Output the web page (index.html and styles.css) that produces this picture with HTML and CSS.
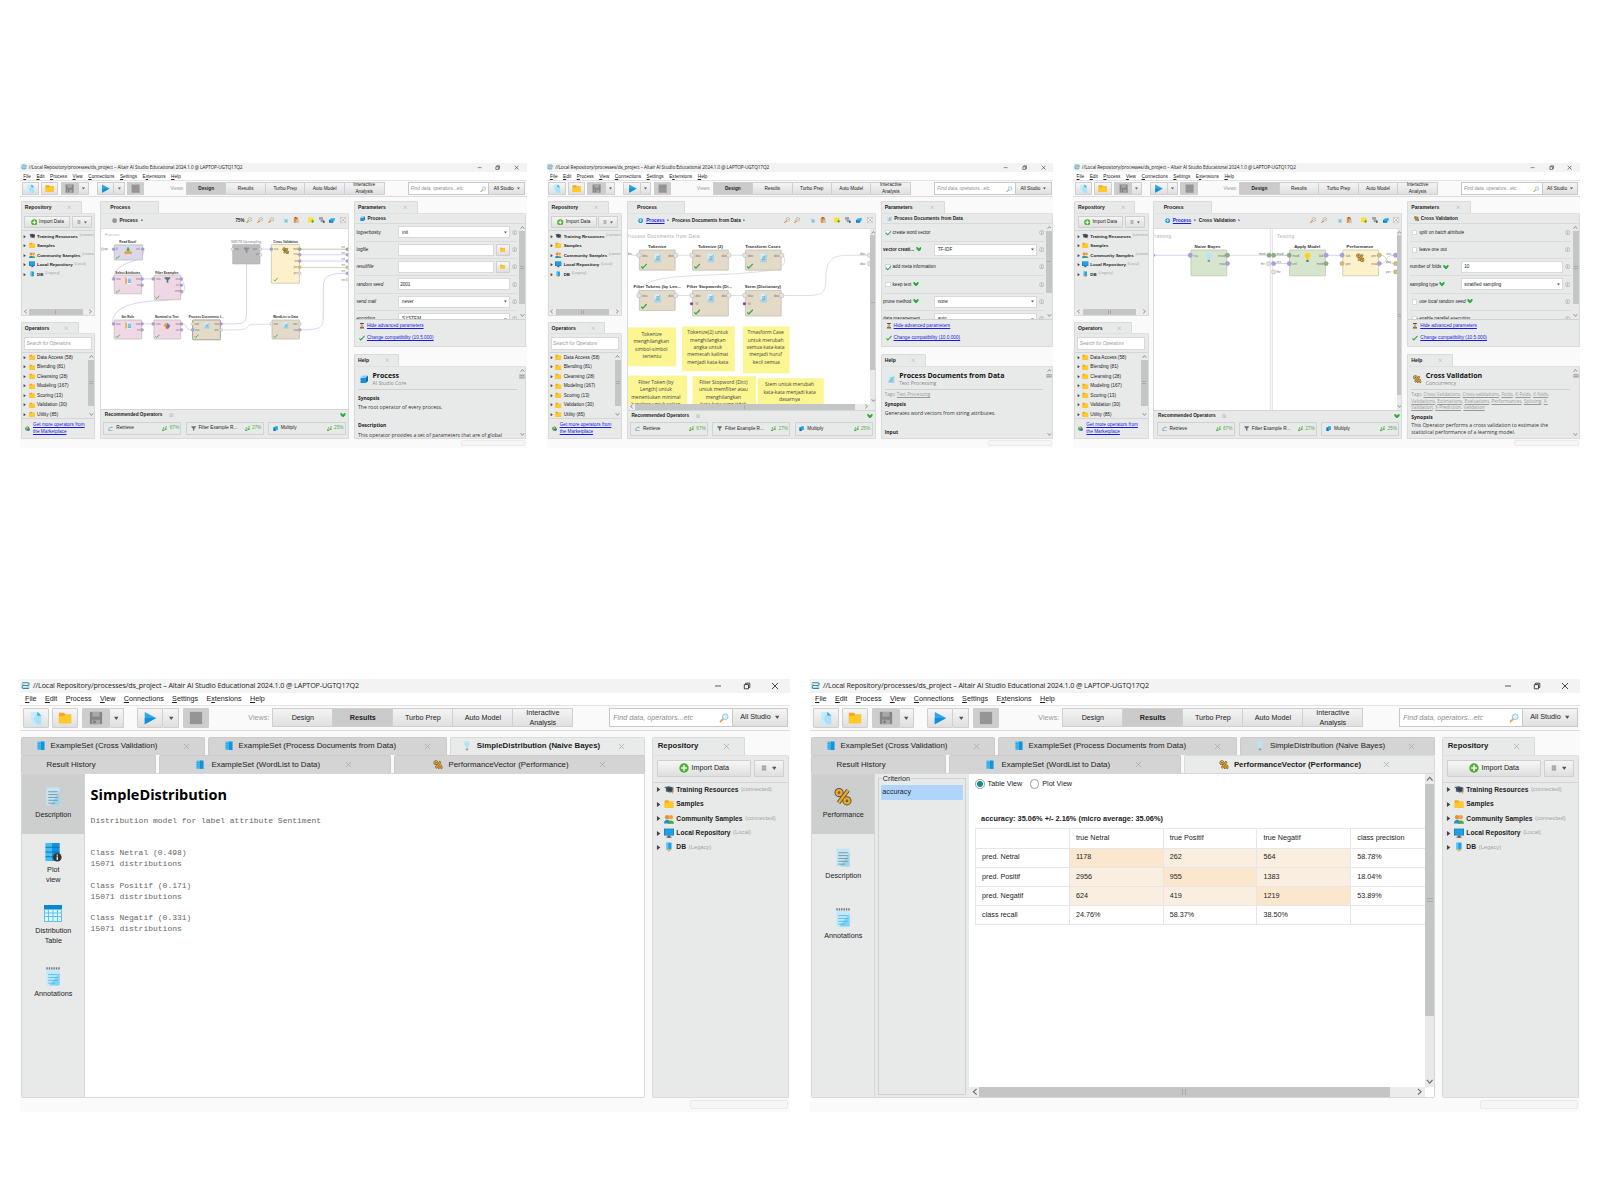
FILE: index.html
```html
<!DOCTYPE html>
<html lang="en">
<head>
<meta charset="utf-8">
<title>Altair AI Studio – ds_project</title>
<link rel="stylesheet" href="styles.css">
<script src="panels.js" defer></script>
</head>
<body>
<svg class="sprite" aria-hidden="true">
  <symbol id="logo" viewBox="0 0 16 16"><path d="M2 3h10q2.500 0 2.500 2.500T12 8H4.500Q2 8 2 10.500T4.500 13H14" fill="none" stroke="#2b8ba5" stroke-width="2"/><path d="M0 6h6M10 10.500h6" stroke="#6db5c8" stroke-width="1.200"/></symbol>
  <symbol id="new" viewBox="0 0 16 16"><path d="M2.500 1H10l4 4v10.500H2.500z" fill="#c5ebfc"/><path d="M10 1l4 4v10.500H9L5 9z" fill="#8fd8f8" opacity=".5"/><path d="M9.500 1l4.500 4.500-4.500-.5z" fill="#2fa5e0"/></symbol>
  <symbol id="folder" viewBox="0 0 16 16"><path d="M1 2h6l1.500 2H15v10H1z" fill="#f5a81c"/><path d="M1 6h5l1.500-1.500H15V14H1z" fill="#ffc928"/></symbol>
  <symbol id="save" viewBox="0 0 16 16"><path d="M1 1h14v14H1z" fill="#868686"/><path d="M4 1h8v5.500H4zM3.500 10h9v5h-9z" fill="#a8a8a8"/><path d="M5 11h2.500v3H5z" fill="#777"/></symbol>
  <symbol id="play" viewBox="0 0 16 16"><path d="M2 1l13 7-13 7z" fill="#29a9ec"/><path d="M2 8h13L2 15z" fill="#1290d6"/></symbol>
  <symbol id="stop" viewBox="0 0 16 16"><path d="M1 1h14v14H1z" fill="#959595"/></symbol>
  <symbol id="caret" viewBox="0 0 8 8"><path d="M0 1.500h8L4 7z" fill="#555"/></symbol>
  <symbol id="right" viewBox="0 0 8 8"><path d="M1.500 0L7 4 1.500 8z" fill="#444"/></symbol>
  <symbol id="x" viewBox="0 0 8 8"><path d="M1 1l6 6M7 1L1 7" fill="none" stroke="currentColor" stroke-width=".9"/></symbol>
  <symbol id="min" viewBox="0 0 8 8"><path d="M1 4h6" stroke="#333" stroke-width=".8"/></symbol>
  <symbol id="restore" viewBox="0 0 8 8"><path d="M1.300 2.600h4.200v4.200H1.300zM2.600 2.500V1.200h4.200v4.300H5.600" fill="none" stroke="#333" stroke-width=".9"/></symbol>
  <symbol id="search" viewBox="0 0 16 16"><path d="M7 9l-5.500 5.500" stroke="#f19a3e" stroke-width="2.600"/><circle cx="10" cy="6" r="4.500" fill="#dff3fd" stroke="#79c3ea" stroke-width="1.400"/></symbol>
  <symbol id="zoomicon" viewBox="0 0 16 16"><path d="M7 9l-6 6" stroke="#ee8a2c" stroke-width="3"/><circle cx="10" cy="6" r="4.800" fill="#f3f9fb" stroke="#a39a8c" stroke-width="1.500"/><path d="M8 6h4" stroke="#4aae3c" stroke-width="1.500"/></symbol>
  <symbol id="plus" viewBox="0 0 16 16"><circle cx="8" cy="8" r="7.500" fill="#4caf2e"/><path d="M8 3.500v9M3.500 8h9" stroke="#fff" stroke-width="2.600"/></symbol>
  <symbol id="list" viewBox="0 0 8 8"><path d="M1 1.500h6M1 4h6M1 6.500h6" stroke="#555" stroke-width="1"/></symbol>
  <symbol id="training" viewBox="0 0 16 16"><path d="M0 3l8-1 7 2v7l-6 1-6-1.500V5z" fill="#4d6573"/><path d="M3 5l5-1 5 1v4l-5 1z" fill="#33444f"/><path d="M13 5l2 9-2-1z" fill="#f08b32"/></symbol>
  <symbol id="people" viewBox="0 0 16 16"><circle cx="5" cy="5" r="3.500" fill="#ef8b34"/><circle cx="11" cy="5" r="3.500" fill="#f6a040"/><path d="M0 15c0-8 10-8 11 0z" fill="#1c8fd6"/><path d="M6 15.500c0-7 10-7 10 0z" fill="#45a843"/></symbol>
  <symbol id="monitor" viewBox="0 0 16 16"><path d="M0 1h16v11H0z" fill="#1f6fa5"/><path d="M1 2h14v9H1z" fill="#1aa3ec"/><path d="M6 12h4v2h2v1.500H4V14h2z" fill="#555"/></symbol>
  <symbol id="db" viewBox="0 0 16 16"><path d="M4 1h8v11H4z" fill="#1ba0ea"/><path d="M4 1h3v11H4z" fill="#5cc6f7"/><path d="M4 12h8l-3 3H7z" fill="#f5b52c"/></symbol>
  <symbol id="data" viewBox="0 0 16 16"><path d="M2 1h8v14H2z" fill="#47bff5"/><path d="M8 1h6v14H8z" fill="#1593dd"/><path d="M2 4.500h7M2 8h7M2 11.500h7" stroke="#1b86bd" stroke-width=".8"/></symbol>
  <symbol id="bulb" viewBox="0 0 16 16"><path d="M8 0a5 5 0 0 1 3 9l-1 2.500H6L5 9a5 5 0 0 1 3-9z" fill="#b8e4f8"/><path d="M6 12.500h4V16H6z" fill="#7fa2b0"/></symbol>
  <symbol id="bulby" viewBox="0 0 16 16"><path d="M8 0a5 5 0 0 1 3 9l-1 2.500H6L5 9a5 5 0 0 1 3-9z" fill="#ffd01f"/><path d="M6 12.500h4V16H6z" fill="#6a7880"/></symbol>
  <symbol id="percent" viewBox="0 0 16 16"><g fill="none" stroke="#555" stroke-width="3.800"><circle cx="4.500" cy="4.500" r="2.200"/><circle cx="11.500" cy="11.800" r="2.200"/><path d="M12.500 2.500L4 13.500"/></g><g fill="none" stroke="#f2a91e" stroke-width="2"><circle cx="4.500" cy="4.500" r="2.200"/><circle cx="11.500" cy="11.800" r="2.200"/><path d="M12.500 2.500L4 13.500"/></g></symbol>
  <symbol id="doc" viewBox="0 0 16 20"><path d="M1 .5h14v19H1z" fill="#c3e6f5"/><path d="M15 4v15.500H5z" fill="#9ed3ec"/><path d="M3 5h10M3 8h10M3 11h10M3 14h10M3 17h7" stroke="#7795a3" stroke-width="1"/></symbol>
  <symbol id="note" viewBox="0 0 16 20"><path d="M1 3h14v16.500H1z" fill="#bfe9fc"/><path d="M15 6v13.500H4z" fill="#7fd2f9"/><path d="M3 8h10M3 11h10M3 14h10M3 17h7" stroke="#4db5e6" stroke-width=".9"/><path d="M1 1.500h14" stroke="#777" stroke-width="2.500" stroke-dasharray="1.500 1"/></symbol>
  <symbol id="plot" viewBox="0 0 18 20"><path d="M1 0h8v19H1z" fill="#45bdf3"/><path d="M8 0h8v19H8z" fill="#0f93df"/><path d="M1 4.500h15M1 9.500h15M1 14.500h15" stroke="#0d6ca5" stroke-width=".9"/><circle cx="13.500" cy="15" r="4.500" fill="#333"/><path d="M13.500 12v1.300M13.500 14.200V18" stroke="#fff" stroke-width="1.300"/></symbol>
  <symbol id="table" viewBox="0 0 18 17"><path d="M0 0h18v17H0z" fill="#58c2f3"/><path d="M0 0h18v4H0z" fill="#0c86cc"/><path d="M1 5h3v2.500H1zM5 5h3.500v2.500H5zM9.500 5H13v2.500H9.500zM14 5h3v2.500h-3zM1 8.500h3V11H1zM5 8.500h3.500V11H5zM9.500 8.500H13V11H9.500zM14 8.500h3V11h-3zM1 12h3v4H1zM5 12h3.500v4H5zM9.500 12H13v4H9.500zM14 12h3v4h-3z" fill="#e3f6fe"/></symbol>
  <symbol id="cube" viewBox="0 0 16 16"><path d="M1 5h10v10H1z" fill="#1590d8"/><path d="M1 5l4-4h10l-4 4z" fill="#7dd0f7"/><path d="M11 5l4-4v10l-4 4z" fill="#0b6ba8"/></symbol>
  <symbol id="multi" viewBox="0 0 16 16"><path d="M1 4h8v11H1z" fill="#0c78bd"/><path d="M6 1h9v11H6z" fill="#24a9ee"/></symbol>
  <symbol id="funnel" viewBox="0 0 16 16"><path d="M1 1h14v2L10 8v7l-4-2V8L1 3z" fill="#5d7580"/></symbol>
  <symbol id="retrieve" viewBox="0 0 16 16"><path d="M3 13V8l4-4h7" fill="none" stroke="#5a7684" stroke-width="2"/><path d="M1 14h13" stroke="#49a9d8" stroke-width="2"/></symbol>
  <symbol id="hands" viewBox="0 0 16 16"><path d="M0 8h7v3H0zM0 12h7v3H0zM8 5h6v3H8zM8 9h6v3H8zM11 0h3v4h-3zM3 4h3v3H3z" fill="#58b348"/></symbol>
  <symbol id="chev" viewBox="0 0 16 12"><path d="M0 1l4-1 4 4 4-4 4 1-2 5-6 6-6-6z" fill="#2bab35"/></symbol>
  <symbol id="check" viewBox="0 0 16 14"><path d="M1 8l4 4L15 1.500" fill="none" stroke="#38a845" stroke-width="3.200"/></symbol>
  <symbol id="info" viewBox="0 0 8 8"><circle cx="4" cy="4" r="3.300" fill="none" stroke="#999" stroke-width=".7"/><path d="M4 1.800v1M4 3.400V6.300" stroke="#888" stroke-width=".9"/></symbol>
  <symbol id="up" viewBox="0 0 8 8"><path d="M1 6l3-3.500L7 6" fill="none" stroke="#666" stroke-width="1.100"/></symbol>
  <symbol id="globe" viewBox="0 0 16 16"><circle cx="7" cy="8" r="6.500" fill="#2f9a4f"/><path d="M3 4l6-1 1 5-5 3z" fill="#f1b33b"/><circle cx="11" cy="11" r="4" fill="#2b7fc0"/></symbol>
  <symbol id="person" viewBox="0 0 16 16"><path d="M2 15c0-7 12-7 12 0z" fill="#55636b"/><circle cx="8" cy="6" r="3.500" fill="#f3a35a"/><path d="M3 0h10v3H3z" fill="#444"/><path d="M7 10h2v5H7z" fill="#ee8a2c"/></symbol>
  <symbol id="copy" viewBox="0 0 16 16"><path d="M1 1h8v10H1z" fill="#dbeaf1"/><path d="M6 5h9v10H6z" fill="#9fd3ea"/><path d="M8 9h5M8 12h5" stroke="#5e9fbd"/></symbol>
  <symbol id="paste" viewBox="0 0 16 16"><path d="M2 1h11v14H2z" fill="#ef8a2d"/><path d="M8 7h7v9H8z" fill="#b9c9d0"/><path d="M5 0h4v3H5z" fill="#555"/></symbol>
  <symbol id="sticky" viewBox="0 0 16 16"><path d="M0 1h14v13H0z" fill="#ffe12f"/><path d="M12 7v8M8 11h8" stroke="#37a33c" stroke-width="2.200"/></symbol>
  <symbol id="auto" viewBox="0 0 16 16"><path d="M1 1h8v5H1zM5 8h8v4H5z" fill="#a3adb2" stroke="#56656d"/><path d="M11 9l5 4-5 3z" fill="#29404c"/></symbol>
  <symbol id="layers" viewBox="0 0 16 16"><path d="M0 7h11v8H0z" fill="#0f78bf"/><path d="M4 3h12l-3 8H3z" fill="#2aaaf0"/></symbol>
  <symbol id="fit" viewBox="0 0 16 16"><path d="M.7.7h14.600v14.600H.7z" fill="#f6f6f6" stroke="#8b7f7f"/><path d="M3 3l3 3M13 3l-3 3M3 13l3-3M13 13l-3-3" stroke="#e06a4a" stroke-width="1.500"/><circle cx="8" cy="8" r="2" fill="#9aa"/></symbol>
  <symbol id="homeup" viewBox="0 0 16 16"><circle cx="8" cy="8" r="7.500" fill="#1d9fe6"/><path d="M8 12.500V5M4.500 8L8 4l3.500 4" fill="none" stroke="#fff" stroke-width="2"/></symbol>
  <symbol id="import" viewBox="0 0 16 16"><path d="M0 9h16v6H0z" fill="#e9a43b"/><path d="M6 0h4v5h3l-5 5-5-5h3z" fill="#46ad43"/></symbol>
  <symbol id="attrs" viewBox="0 0 16 16"><path d="M1 0h14v16H1z" fill="#f7fbfd"/><path d="M1 0h4v16H1z" fill="#f0a13a"/><path d="M7 3h8v11H7z" fill="#58bdee"/><path d="M7 6h8M7 10h8" stroke="#e3f4fc"/></symbol>
  <symbol id="nominal" viewBox="0 0 16 16"><path d="M0 9l4-7 5 3-1 8z" fill="#f0a52e"/><path d="M8 2l7 6-3 6-5-3z" fill="#2f93d0"/><path d="M5 9h6v6H5z" fill="#d5623a"/></symbol>
  <symbol id="blank" viewBox="0 0 16 16"><path d="M2 0h12v16H2z" fill="#a4d3ea"/><path d="M2 0h12L2 12z" fill="#d8eef8"/><path d="M5 5h6M5 8h6M5 11h6" stroke="#5a9fc2"/></symbol>
</svg>

<!-- Panels shared by all windows -->
<template id="tpl-chrome">
  <header class="titlebar"><svg class="i10"><use href="#logo"/></svg><h1>//Local Repository/processes/ds_project – Altair AI Studio Educational 2024.1.0 @ LAPTOP-UGTQ17Q2</h1><div class="winbtns"><svg><use href="#min"/></svg><svg><use href="#restore"/></svg><svg><use href="#x"/></svg></div></header>
  <nav class="menubar"><span><u>F</u>ile</span><span><u>E</u>dit</span><span><u>P</u>rocess</span><span><u>V</u>iew</span><span><u>C</u>onnections</span><span><u>S</u>ettings</span><span>E<u>x</u>tensions</span><span><u>H</u>elp</span></nav>
  <div class="toolbar">
    <div class="btn tool"><svg><use href="#new"/></svg></div><div class="btn tool"><svg><use href="#folder"/></svg></div>
    <div class="split save"><div class="btn tool off"><svg><use href="#save"/></svg></div><div class="btn drop"><svg><use href="#caret"/></svg></div></div>
    <div class="split run"><div class="btn tool"><svg><use href="#play"/></svg></div><div class="btn drop"><svg><use href="#caret"/></svg></div></div>
    <div class="btn tool off"><svg><use href="#stop"/></svg></div>
    <span class="views-label">Views:</span>
    <div class="views"><span>Design</span><span>Results</span><span>Turbo Prep</span><span>Auto Model</span><span>Interactive<br>Analysis</span></div>
    <div class="find"><span>Find data, operators...etc</span><svg class="i10"><use href="#search"/></svg></div><div class="scope">All Studio<svg><use href="#caret"/></svg></div>
  </div>
</template>
<template id="tpl-repo">
  <div class="tab"><b>Repository</b><svg class="close"><use href="#x"/></svg></div>
  <div class="body">
    <div class="repo-actions"><div class="btn"><svg class="i10"><use href="#plus"/></svg>Import Data</div><div class="btn more"><svg class="lines"><use href="#list"/></svg><svg><use href="#caret"/></svg></div></div>
    <ul class="tree"><li><svg class="arr"><use href="#right"/></svg><svg class="i10"><use href="#training"/></svg><b>Training Resources</b><i>(connected)</i></li><li><svg class="arr"><use href="#right"/></svg><svg class="i10"><use href="#folder"/></svg><b>Samples</b></li><li><svg class="arr"><use href="#right"/></svg><svg class="i10"><use href="#people"/></svg><b>Community Samples</b><i>(connected)</i></li><li><svg class="arr"><use href="#right"/></svg><svg class="i10"><use href="#monitor"/></svg><b>Local Repository</b><i>(Local)</i></li><li><svg class="arr"><use href="#right"/></svg><svg class="i10"><use href="#db"/></svg><b>DB</b><i>(Legacy)</i></li></ul>
    <div class="hscroll"><svg class="l"><use href="#up"/></svg><div class="thumb t-repo"></div><svg class="r"><use href="#up"/></svg></div>
  </div>
</template>
<template id="tpl-ops">
  <div class="tab"><b>Operators</b><svg class="close"><use href="#x"/></svg></div>
  <div class="body">
    <div class="ops-search">Search for Operators</div>
    <div class="ops-list"><ul class="tree"><li><svg class="arr"><use href="#right"/></svg><svg class="i10"><use href="#folder"/></svg>Data Access (58)</li><li><svg class="arr"><use href="#right"/></svg><svg class="i10"><use href="#folder"/></svg>Blending (81)</li><li><svg class="arr"><use href="#right"/></svg><svg class="i10"><use href="#folder"/></svg>Cleansing (28)</li><li><svg class="arr"><use href="#right"/></svg><svg class="i10"><use href="#folder"/></svg>Modeling (167)</li><li><svg class="arr"><use href="#right"/></svg><svg class="i10"><use href="#folder"/></svg>Scoring (13)</li><li><svg class="arr"><use href="#right"/></svg><svg class="i10"><use href="#folder"/></svg>Validation (30)</li><li><svg class="arr"><use href="#right"/></svg><svg class="i10"><use href="#folder"/></svg>Utility (85)</li></ul><div class="vscroll"><svg><use href="#up"/></svg><div class="thumb t-ops"></div><svg class="d"><use href="#up"/></svg></div></div>
    <div class="market"><svg class="i8"><use href="#globe"/></svg><a>Get more operators from<br>the Marketplace</a></div>
  </div>
</template>
<template id="tpl-rec">
  <div class="rec-head"><b>Recommended Operators</b><svg class="i8"><use href="#info"/></svg><svg class="chev"><use href="#chev"/></svg></div>
  <div class="rec"><div><svg class="i8"><use href="#retrieve"/></svg>Retrieve<em><svg class="i8"><use href="#hands"/></svg>67%</em></div><div><svg class="i8"><use href="#funnel"/></svg>Filter Example R...<em><svg class="i8"><use href="#hands"/></svg>27%</em></div><div><svg class="i8"><use href="#multi"/></svg>Multiply<em><svg class="i8"><use href="#hands"/></svg>25%</em></div></div>
</template>
<template id="tpl-tools"><svg><use href="#zoomicon"/></svg><svg class="gap"><use href="#zoomicon"/></svg><svg><use href="#copy"/></svg><svg class="gap"><use href="#paste"/></svg><svg><use href="#sticky"/></svg><svg><use href="#auto"/></svg><svg><use href="#layers"/></svg><svg><use href="#fit"/></svg></template>

<main class="page">
<div class="row row-small">

<!-- Design view: main process -->
<section class="window small">
  <div class="chrome" data-panel="chrome"></div>
  <div class="work design">
    <div class="left"><div class="dock repo" data-panel="repo"></div><div class="dock ops" data-panel="ops"></div></div>
    <div class="dock process">
      <div class="tab"><b>Process</b></div>
      <div class="body">
        <div class="crumbs"><svg class="i8 dim"><use href="#stop"/></svg><b>Process</b><svg class="sep"><use href="#right"/></svg><div class="canvas-tools"><b>75%</b><svg><use href="#zoomicon"/></svg><div class="tools" data-panel="tools"></div></div></div>
        <svg class="canvas" viewBox="257 220 747 546">
          <text class="hint sm" x="269" y="241">Process</text>
          <g class="wire">
            <path d="M383 281C400 330 300 305 294 371M383 371H417M500 371C525 410 500 437 430 437C380 438 285 450 293 507M383 507H417M500 507C525 507 505 525 534 525M620 507H660C690 507 697 500 697 470V326M740 281H772M860 298H998M860 317H998M860 525C915 525 929 520 929 490V400C929 365 940 354 998 354"/>
            <path class="gr" d="M860 281H998"/><path class="ol" d="M860 336H998"/><path class="gy" d="M620 525H670C710 525 690 508 725 508H774M267 281H275"/>
          </g>
          <g class="oplabel sm"><text x="338" y="263">Read Excel</text><text x="338" y="355">Select Attributes</text><text x="456" y="355">Filter Examples</text><text class="faded" x="696" y="263">SMOTE Upsampling</text><text x="815" y="263">Cross Validation</text><text x="338" y="490">Set Role</text><text x="456" y="490">Nominal to Text</text><text x="575" y="490">Process Documents f...</text><text x="815" y="490">WordList to Data</text></g>
          <g class="op"><rect class="violet" x="297" y="268" width="86" height="46"/><rect class="pink" x="297" y="359" width="83" height="57"/><rect class="pink" x="418" y="359" width="80" height="75"/><rect class="grey" x="655" y="267" width="83" height="59"/><rect class="yellow" x="772" y="267" width="85" height="117"/><rect class="pink" x="297" y="495" width="83" height="58"/><rect class="pink" x="417" y="495" width="81" height="58"/><rect class="tan sel" x="534" y="495" width="84" height="60"/><rect class="tan" x="774" y="495" width="83" height="58"/></g>
          <g class="ports"><circle cx="295" cy="281" r="4.500"/><circle cx="383" cy="281" r="4.500"/><circle cx="295" cy="371" r="4.500"/><circle cx="381" cy="371" r="4.500"/><circle cx="381" cy="390" r="4.500"/><circle cx="415" cy="371" r="4.500"/><circle cx="500" cy="371" r="4.500"/><circle cx="500" cy="390" r="4.500"/><circle cx="500" cy="409" r="4.500"/><circle cx="772" cy="281" r="4.500"/><circle cx="858" cy="298" r="4.500"/><circle cx="858" cy="317" r="4.500"/><circle cx="295" cy="507" r="4.500"/><circle cx="381" cy="507" r="4.500"/><circle cx="381" cy="525" r="4.500"/><circle cx="415" cy="507" r="4.500"/><circle cx="500" cy="507" r="4.500"/><circle cx="500" cy="525" r="4.500"/><circle cx="534" cy="525" r="4.500"/><circle cx="620" cy="507" r="4.500"/><circle cx="858" cy="525" r="4.500"/><circle cx="1002" cy="298" r="4.500"/><circle cx="1002" cy="317" r="4.500"/><circle cx="1002" cy="354" r="4.500"/>
            <g class="off"><circle cx="261" cy="281" r="4.500"/><circle cx="655" cy="281" r="4.500"/><circle cx="739" cy="281" r="4.500"/><circle cx="739" cy="298" r="4.500"/><circle cx="858" cy="354" r="4.500"/><circle cx="534" cy="507" r="4.500"/><circle cx="620" cy="525" r="4.500"/><circle cx="773" cy="507" r="4.500"/><circle cx="858" cy="507" r="4.500"/><circle cx="1002" cy="373" r="4.500"/></g><g class="mod"><circle cx="858" cy="281" r="4.500"/><circle cx="1002" cy="281" r="4.500"/></g><g class="per"><circle cx="858" cy="336" r="4.500"/><circle cx="1002" cy="336" r="4.500"/></g></g>
          <g class="pt sm"><text x="267" y="283">inp</text><text x="302" y="283">fil</text><text x="363" y="283">out</text><text x="303" y="373">exa</text><text x="362" y="373">exa</text><text x="366" y="392">ori</text><text x="424" y="373">exa</text><text x="482" y="373">exa</text><text x="484" y="392">ori</text><text x="480" y="411">unm</text><text x="661" y="283">exa</text><text x="716" y="283">ups</text><text x="726" y="300">ori</text><text x="780" y="283">exa</text><text x="838" y="283">mod</text><text x="840" y="300">exa</text><text x="842" y="319">tes</text><text x="840" y="338">per</text><text x="840" y="357">per</text><text x="303" y="509">exa</text><text x="362" y="509">exa</text><text x="366" y="527">ori</text><text x="424" y="509">exa</text><text x="482" y="509">exa</text><text x="484" y="527">ori</text><text x="541" y="509">wor</text><text x="541" y="527">exa</text><text x="600" y="509">exa</text><text x="600" y="527">wor</text><text x="780" y="509">wor</text><text x="838" y="509">wor</text><text x="840" y="527">exa</text><text x="984" y="278">res</text><text x="984" y="295">res</text><text x="984" y="314">res</text><text x="984" y="333">res</text><text x="984" y="351">res</text><text x="984" y="376">res</text></g>
          <use href="#import" x="327" y="275" width="24" height="22"/><use href="#attrs" x="329" y="366" width="20" height="20"/><use href="#funnel" x="447" y="365" width="22" height="20"/><use href="#funnel" x="686" y="275" width="22" height="20" opacity=".6"/><use href="#percent" x="805" y="275" width="21" height="21"/><use href="#attrs" x="329" y="502" width="20" height="20"/><use href="#nominal" x="446" y="501" width="22" height="22"/><use href="#blank" x="567" y="501" width="20" height="22"/><use href="#blank" x="806" y="501" width="20" height="22"/>
          <use href="#check" x="300" y="299" width="16" height="12"/><use href="#check" x="300" y="402" width="16" height="12"/><use href="#check" x="420" y="420" width="16" height="12"/><use href="#check" x="777" y="367" width="16" height="12"/><use href="#check" x="300" y="538" width="16" height="12"/><use href="#check" x="420" y="538" width="16" height="12"/><use href="#check" x="538" y="538" width="16" height="12"/><use href="#check" x="777" y="538" width="16" height="12"/>
        </svg>
        <div data-panel="rec"></div>
      </div>
    </div>
    <div class="right">
      <div class="dock params">
        <div class="tab"><b>Parameters</b><svg class="close"><use href="#x"/></svg></div>
        <div class="body">
          <div class="p-title"><svg class="i8"><use href="#cube"/></svg><b>Process</b></div>
          <div class="p-scroll"><div class="p-rows">
            <div class="p-row"><label>logverbosity</label><div class="field">init<svg><use href="#caret"/></svg></div><svg class="i8"><use href="#info"/></svg></div>
            <div class="p-row"><label>logfile</label><div class="field"></div><div class="btn pick"><svg class="i8"><use href="#folder"/></svg></div><svg class="i8"><use href="#info"/></svg></div>
            <div class="p-row"><label class="it">resultfile</label><div class="field"></div><div class="btn pick"><svg class="i8"><use href="#folder"/></svg></div><svg class="i8"><use href="#info"/></svg></div>
            <div class="p-row"><label class="it">random seed</label><div class="field num">2001</div><svg class="i8"><use href="#info"/></svg></div>
            <div class="p-row"><label class="it">send mail</label><div class="field">never<svg><use href="#caret"/></svg></div><svg class="i8"><use href="#info"/></svg></div>
            <div class="p-row"><label>encoding</label><div class="field">SYSTEM<svg><use href="#caret"/></svg></div><svg class="i8"><use href="#info"/></svg></div>
          </div><div class="vscroll"><svg><use href="#up"/></svg><div class="thumb t-par"></div><svg class="d"><use href="#up"/></svg></div></div>
          <div class="p-links"><div><svg class="i10"><use href="#person"/></svg><a>Hide advanced parameters</a></div><div><svg class="i10"><use href="#check"/></svg><a>Change compatibility (10.5.000)</a></div></div>
        </div>
      </div>
      <div class="dock help">
        <div class="tab"><b>Help</b><svg class="close"><use href="#x"/></svg></div>
        <div class="body">
          <article><div class="h-head"><svg><use href="#cube"/></svg><div><h2>Process</h2><p>AI Studio Core</p></div></div><h3 class="s1">Synopsis</h3><p>The root operator of every process.</p><h3 class="s2">Description</h3><p>This operator provides a set of parameters that are of global</p></article>
          <div class="vscroll"><svg><use href="#up"/></svg><div class="thumb t-help1"></div><svg class="d"><use href="#up"/></svg></div>
        </div>
      </div>
    </div>
  </div>
  <footer class="status"><div></div></footer>
</section>

<!-- Design view: document processing subprocess -->
<section class="window small">
  <div class="chrome" data-panel="chrome"></div>
  <div class="work design">
    <div class="left"><div class="dock repo" data-panel="repo"></div><div class="dock ops" data-panel="ops"></div></div>
    <div class="dock process">
      <div class="tab"><b>Process</b></div>
      <div class="body">
        <div class="crumbs"><svg class="i8"><use href="#homeup"/></svg><a>Process</a><svg class="sep"><use href="#right"/></svg><b>Process Documents from Data</b><svg class="sep"><use href="#right"/></svg><div class="canvas-tools"><div class="tools" data-panel="tools"></div></div></div>
        <div class="canvas-box"><svg class="canvas" viewBox="263 220 729 527">
          <text class="hint" x="257" y="248">Process Documents from Data</text>
          <g class="wire doc"><path d="M275 299H295M413 299H451M572 299H610M730 299C750 340 700 345 620 352C480 365 290 350 292 420M413 420H451M572 420H610M730 420H800C850 420 858 410 858 370C858 310 880 299 930 299H985"/></g>
          <g class="oplabel"><text x="351" y="276">Tokenize</text><text x="511" y="276">Tokenize (2)</text><text x="669" y="276">Transform Cases</text><text x="351" y="397">Filter Tokens (by Len...</text><text x="508" y="397">Filter Stopwords (Di...</text><text x="669" y="397">Stem (Dictionary)</text></g>
          <g class="op"><rect class="tan" x="297" y="283" width="108" height="61"/><rect class="tan" x="457" y="283" width="108" height="61"/><rect class="tan" x="616" y="283" width="108" height="61"/><rect class="tan" x="297" y="405" width="108" height="60"/><rect class="tan" x="457" y="405" width="108" height="77"/><rect class="tan" x="616" y="405" width="108" height="77"/></g>
          <g class="ports"><g class="off"><circle cx="296" cy="299" r="7"/><circle cx="406" cy="299" r="7"/><circle cx="456" cy="299" r="7"/><circle cx="566" cy="299" r="7"/><circle cx="615" cy="299" r="7"/><circle cx="725" cy="299" r="7"/><circle cx="296" cy="420" r="7"/><circle cx="406" cy="420" r="7"/><circle cx="456" cy="420" r="7"/><circle cx="566" cy="420" r="7"/><circle cx="615" cy="420" r="7"/><circle cx="725" cy="420" r="7"/><circle cx="990" cy="299" r="7"/><circle cx="990" cy="324" r="7"/></g><g class="file"><circle cx="454" cy="445" r="4"/><circle cx="613" cy="445" r="4"/></g></g>
          <g class="pt"><text x="260" y="298">doc</text><text x="306" y="303">doc</text><text x="384" y="303">doc</text><text x="466" y="303">doc</text><text x="544" y="303">doc</text><text x="624" y="303">doc</text><text x="702" y="303">doc</text><text x="306" y="424">doc</text><text x="384" y="424">doc</text><text x="466" y="424">doc</text><text x="544" y="424">doc</text><text x="624" y="424">doc</text><text x="702" y="424">doc</text><text x="466" y="448">fil</text><text x="624" y="448">fil</text><text x="961" y="298">doc</text><text x="961" y="328">doc</text></g>
          <use href="#blank" x="339" y="292" width="26" height="30"/><use href="#blank" x="499" y="292" width="26" height="30"/><use href="#blank" x="658" y="292" width="26" height="30"/><use href="#blank" x="339" y="413" width="26" height="30"/><use href="#blank" x="499" y="413" width="26" height="30"/><use href="#blank" x="658" y="413" width="26" height="30"/>
          <use href="#check" x="301" y="323" width="20" height="17"/><use href="#check" x="461" y="323" width="20" height="17"/><use href="#check" x="620" y="323" width="20" height="17"/><use href="#check" x="301" y="444" width="20" height="17"/><use href="#check" x="461" y="461" width="20" height="17"/><use href="#check" x="620" y="461" width="20" height="17"/>
          <g class="sticky"><rect x="260" y="516" width="148" height="117"/><rect x="426" y="513" width="158" height="135"/><rect x="609" y="513" width="140" height="141"/><rect x="260" y="661" width="181" height="95"/><rect x="457" y="663" width="191" height="95"/><rect x="653" y="669" width="199" height="90"/></g>
          <g class="memo">
            <text><tspan x="334" y="541">Tokenize</tspan><tspan x="333" y="563">menghilangkan</tspan><tspan x="333" y="586">simbol-simbol</tspan><tspan x="335" y="608">tertentu</tspan></text>
            <text><tspan x="503" y="537">Tokenize(2) untuk</tspan><tspan x="503" y="559">menghilangkan</tspan><tspan x="503" y="581">angka untuk</tspan><tspan x="503" y="603">memecah kalimat</tspan><tspan x="503" y="626">menjadi kata-kata</tspan></text>
            <text><tspan x="677" y="537">Trnasform Case</tspan><tspan x="677" y="559">untuk merubah</tspan><tspan x="677" y="581">semua kata-kata</tspan><tspan x="677" y="603">menjadi huruf</tspan><tspan x="679" y="626">kecil semua</tspan></text>
            <text><tspan x="347" y="686">Filter Token (by</tspan><tspan x="347" y="708">Length) untuk</tspan><tspan x="347" y="731">menentukan minimal</tspan><tspan x="347" y="753">karakter untuk setiap</tspan></text>
            <text><tspan x="550" y="686">Filter Stopword (Dict)</tspan><tspan x="550" y="708">untuk memfilter atau</tspan><tspan x="550" y="731">menghilangkan</tspan><tspan x="550" y="753">kata-kata yang tidak</tspan></text>
            <text><tspan x="749" y="693">Stem untuk merubah</tspan><tspan x="749" y="715">kata-kata menjadi kata</tspan><tspan x="749" y="737">dasarnya</tspan></text>
          </g>
        </svg><div class="vscroll"><svg><use href="#up"/></svg><div class="thumb t-can2"></div><svg class="d"><use href="#up"/></svg></div></div>
        <div class="hscroll can"><svg class="l"><use href="#up"/></svg><div class="thumb t-canh"></div><svg class="r"><use href="#up"/></svg></div>
        <div data-panel="rec"></div>
      </div>
    </div>
    <div class="right">
      <div class="dock params">
        <div class="tab"><b>Parameters</b><svg class="close"><use href="#x"/></svg></div>
        <div class="body">
          <div class="p-title"><svg class="i8"><use href="#blank"/></svg><b>Process Documents from Data</b></div>
          <div class="p-scroll"><div class="p-rows narrow">
            <div class="p-row"><span class="box on"></span><span class="grow">create word vector</span><svg class="i8"><use href="#info"/></svg></div>
            <div class="p-row"><label><b>vector creati...</b><svg class="chev"><use href="#chev"/></svg></label><div class="field">TF-IDF<svg><use href="#caret"/></svg></div><svg class="i8"><use href="#info"/></svg></div>
            <div class="p-row"><span class="box on"></span><span class="grow">add meta information</span><svg class="i8"><use href="#info"/></svg></div>
            <div class="p-row"><span class="box"></span><span class="grow">keep text<svg class="chev"><use href="#chev"/></svg></span><svg class="i8"><use href="#info"/></svg></div>
            <div class="p-row"><label>prune method<svg class="chev"><use href="#chev"/></svg></label><div class="field">none<svg><use href="#caret"/></svg></div><svg class="i8"><use href="#info"/></svg></div>
            <div class="p-row"><label>data management</label><div class="field">auto<svg><use href="#caret"/></svg></div><svg class="i8"><use href="#info"/></svg></div>
          </div><div class="vscroll"><svg><use href="#up"/></svg><div class="thumb t-par2"></div><svg class="d"><use href="#up"/></svg></div></div>
          <div class="p-links"><div><svg class="i10"><use href="#person"/></svg><a>Hide advanced parameters</a></div><div><svg class="i10"><use href="#check"/></svg><a>Change compatibility (10.0.000)</a></div></div>
        </div>
      </div>
      <div class="dock help">
        <div class="tab"><b>Help</b><svg class="close"><use href="#x"/></svg></div>
        <div class="body">
          <article><div class="h-head"><svg><use href="#blank"/></svg><div><h2>Process Documents from Data</h2><p>Text Processing</p></div></div><p class="tags">Tags: <u>Text Processing</u></p><h3 class="s3">Synopsis</h3><p>Generates word vectors from string attributes.</p><h3 class="s2">Input</h3></article>
          <div class="vscroll"><svg><use href="#up"/></svg><div class="thumb t-help2"></div><svg class="d"><use href="#up"/></svg></div>
        </div>
      </div>
    </div>
  </div>
  <footer class="status"><div></div></footer>
</section>

<!-- Design view: cross validation subprocess -->
<section class="window small">
  <div class="chrome" data-panel="chrome"></div>
  <div class="work design">
    <div class="left"><div class="dock repo" data-panel="repo"></div><div class="dock ops" data-panel="ops"></div></div>
    <div class="dock process">
      <div class="tab"><b>Process</b></div>
      <div class="body">
        <div class="crumbs"><svg class="i8"><use href="#homeup"/></svg><a>Process</a><svg class="sep"><use href="#right"/></svg><b>Cross Validation</b><svg class="sep"><use href="#right"/></svg><div class="canvas-tools"><div class="tools" data-panel="tools"></div></div></div>
        <div class="canvas-box"><svg class="canvas" viewBox="266 220 729 546">
          <path class="divider" d="M616 220V766M622 220V766"/>
          <text class="hint" x="259" y="248">Training</text><text class="hint" x="636" y="248">Testing</text>
          <g class="wire"><path d="M260 299H373M630 324H671M785 299H833M945 324C975 324 955 299 990 299"/><path class="gr" d="M630 299H671"/><path class="ol" d="M945 299C975 299 955 324 990 324"/><path class="gy" d="M493 299H606"/></g>
          <g class="oplabel"><text x="427" y="276">Naive Bayes</text><text x="727" y="276">Apply Model</text><text x="886" y="276">Performance</text></g>
          <g class="op"><rect class="green" x="377" y="283" width="108" height="78"/><rect class="green" x="674" y="283" width="108" height="78"/><rect class="yellow" x="834" y="283" width="108" height="78"/></g>
          <g class="ports"><circle cx="375" cy="299" r="6.500"/><circle cx="487" cy="324" r="6.500"/><circle cx="265" cy="299" r="4"/><circle cx="626" cy="324" r="6.500"/><circle cx="673" cy="324" r="6.500"/><circle cx="784" cy="299" r="6.500"/><circle cx="832" cy="299" r="6.500"/><circle cx="944" cy="324" r="6.500"/><circle cx="993" cy="299" r="6.500"/><g class="mod"><circle cx="487" cy="299" r="6.500"/><circle cx="612" cy="299" r="6.500"/><circle cx="626" cy="299" r="6.500"/><circle cx="673" cy="299" r="6.500"/><circle cx="784" cy="324" r="6.500"/></g><g class="per"><circle cx="944" cy="299" r="6.500"/><circle cx="993" cy="324" r="6.500"/><circle cx="993" cy="349" r="6.500"/><circle cx="832" cy="324" r="6.500"/></g><g class="off"><circle cx="611" cy="324" r="6.500"/><circle cx="626" cy="349" r="6.500"/></g></g>
          <g class="pt"><text x="386" y="303">tra</text><text x="459" y="303">mod</text><text x="463" y="328">exa</text><text x="581" y="298">mod</text><text x="587" y="328">thr</text><text x="635" y="298">mod</text><text x="635" y="323">tes</text><text x="635" y="352">thr</text><text x="683" y="303">mod</text><text x="682" y="328">unl</text><text x="762" y="303">lab</text><text x="756" y="328">mod</text><text x="843" y="303">lab</text><text x="843" y="328">per</text><text x="920" y="303">per</text><text x="920" y="328">exa</text><text x="966" y="298">tes</text><text x="964" y="323">per</text><text x="964" y="352">per</text></g>
          <use href="#bulb" x="417" y="290" width="28" height="30"/><use href="#bulby" x="714" y="290" width="28" height="30"/><use href="#percent" x="874" y="292" width="26" height="28"/>
        </svg><div class="vscroll"><svg><use href="#up"/></svg><div class="thumb t-can3"></div><svg class="d"><use href="#up"/></svg></div></div>
        <div data-panel="rec"></div>
      </div>
    </div>
    <div class="right">
      <div class="dock params">
        <div class="tab"><b>Parameters</b><svg class="close"><use href="#x"/></svg></div>
        <div class="body">
          <div class="p-title"><svg class="i8"><use href="#percent"/></svg><b>Cross Validation</b></div>
          <div class="p-scroll"><div class="p-rows narrow">
            <div class="p-row"><span class="box"></span><span class="grow it">split on batch attribute</span><svg class="i8"><use href="#info"/></svg></div>
            <div class="p-row"><span class="box"></span><span class="grow">leave one out</span><svg class="i8"><use href="#info"/></svg></div>
            <div class="p-row"><label>number of folds<svg class="chev"><use href="#chev"/></svg></label><div class="field">10</div><svg class="i8"><use href="#info"/></svg></div>
            <div class="p-row"><label>sampling type<svg class="chev"><use href="#chev"/></svg></label><div class="field">stratified sampling<svg><use href="#caret"/></svg></div><svg class="i8"><use href="#info"/></svg></div>
            <div class="p-row"><span class="box"></span><span class="grow it">use local random seed<svg class="chev"><use href="#chev"/></svg></span><svg class="i8"><use href="#info"/></svg></div>
            <div class="p-row"><span class="box on"></span><span class="grow">enable parallel execution</span><svg class="i8"><use href="#info"/></svg></div>
          </div><div class="vscroll"><svg><use href="#up"/></svg><div class="thumb t-par"></div><svg class="d"><use href="#up"/></svg></div></div>
          <div class="p-links"><div><svg class="i10"><use href="#person"/></svg><a>Hide advanced parameters</a></div><div><svg class="i10"><use href="#check"/></svg><a>Change compatibility (10.5.000)</a></div></div>
        </div>
      </div>
      <div class="dock help">
        <div class="tab"><b>Help</b><svg class="close"><use href="#x"/></svg></div>
        <div class="body">
          <article><div class="h-head"><svg><use href="#percent"/></svg><div><h2>Cross Validation</h2><p>Concurrency</p></div></div><p class="tags">Tags: <u>Cross Validations</u>, <u>Cross-validations</u>, <u>Folds</u>, <u>K-Folds</u>, <u>K-folds</u>,<br><u>Validations</u>, <u>Estimations</u>, <u>Evaluations</u>, <u>Performances</u>, <u>Splitting</u>, <u>X-</u><br><u>Validation</u>, <u>X-Prediction</u>, <u>Validation</u></p><h3 class="s4">Synopsis</h3><p class="tight">This Operator performs a cross validation to estimate the<br>statistical performance of a learning model.</p></article>
          <div class="vscroll"><svg><use href="#up"/></svg><div class="thumb t-help2"></div><svg class="d"><use href="#up"/></svg></div>
        </div>
      </div>
    </div>
  </div>
  <footer class="status"><div></div></footer>
</section>
</div>

<div class="row row-large">
<!-- Results view: naive bayes model -->
<section class="window">
  <div class="chrome" data-panel="chrome"></div>
  <div class="work results">
    <div class="result">
      <div class="rtabs"><div class="rtab r1"><svg class="i10"><use href="#data"/></svg><span>ExampleSet (Cross Validation)</span><svg class="close"><use href="#x"/></svg></div><div class="rtab r2"><svg class="i10"><use href="#data"/></svg><span>ExampleSet (Process Documents from Data)</span><svg class="close"><use href="#x"/></svg></div><div class="rtab r3 on"><svg class="i10"><use href="#bulb"/></svg><span>SimpleDistribution (Naive Bayes)</span><svg class="close"><use href="#x"/></svg></div></div>
      <div class="rtabs"><div class="rtab r4"><span>Result History</span></div><div class="rtab r5"><svg class="i10"><use href="#data"/></svg><span>ExampleSet (WordList to Data)</span><svg class="close"><use href="#x"/></svg></div><div class="rtab r6"><svg class="i10"><use href="#percent"/></svg><span>PerformanceVector (Performance)</span><svg class="close"><use href="#x"/></svg></div></div>
      <div class="rbody">
        <aside class="side"><div class="on"><svg><use href="#doc"/></svg>Description</div><div class="two"><svg><use href="#plot"/></svg>Plot<br>view</div><div class="two b"><svg><use href="#table"/></svg>Distribution<br>Table</div><div class="two"><svg><use href="#note"/></svg>Annotations</div></aside>
        <div class="model"><h2>SimpleDistribution</h2><pre>Distribution model for label attribute Sentiment


Class Netral (0.498)
15071 distributions

Class Positif (0.171)
15071 distributions

Class Negatif (0.331)
15071 distributions</pre></div>
      </div>
    </div>
    <div class="dock repo" data-panel="repo"></div>
  </div>
  <footer class="status"><div></div></footer>
</section>

<!-- Results view: performance vector -->
<section class="window">
  <div class="chrome" data-panel="chrome"></div>
  <div class="work results">
    <div class="result">
      <div class="rtabs"><div class="rtab r1"><svg class="i10"><use href="#data"/></svg><span>ExampleSet (Cross Validation)</span><svg class="close"><use href="#x"/></svg></div><div class="rtab r2"><svg class="i10"><use href="#data"/></svg><span>ExampleSet (Process Documents from Data)</span><svg class="close"><use href="#x"/></svg></div><div class="rtab r3"><svg class="i10"><use href="#bulb"/></svg><span>SimpleDistribution (Naive Bayes)</span><svg class="close"><use href="#x"/></svg></div></div>
      <div class="rtabs"><div class="rtab r4"><span>Result History</span></div><div class="rtab r5"><svg class="i10"><use href="#data"/></svg><span>ExampleSet (WordList to Data)</span><svg class="close"><use href="#x"/></svg></div><div class="rtab r6 on"><svg class="i10"><use href="#percent"/></svg><span>PerformanceVector (Performance)</span><svg class="close"><use href="#x"/></svg></div></div>
      <div class="rbody">
        <aside class="side"><div class="on"><svg><use href="#percent"/></svg>Performance</div><div><svg><use href="#doc"/></svg>Description</div><div><svg><use href="#note"/></svg>Annotations</div></aside>
        <div class="criteria"><fieldset><legend>Criterion</legend><div>accuracy</div></fieldset></div>
        <div class="perf">
          <div class="perf-main"><div class="perf-view">
            <div class="radios"><span class="radio on"></span>Table View<span class="radio second"></span>Plot View</div>
            <h3>accuracy: 35.06% +/- 2.16% (micro average: 35.06%)</h3>
            <table><tr><td></td><td>true Netral</td><td>true Positif</td><td>true Negatif</td><td>class precision</td></tr>
            <tr><td>pred. Netral</td><td class="hit">1178</td><td class="miss">262</td><td class="miss">564</td><td>58.78%</td></tr>
            <tr><td>pred. Positif</td><td class="miss">2956</td><td class="hit">955</td><td class="miss">1383</td><td>18.04%</td></tr>
            <tr><td>pred. Negatif</td><td class="miss">624</td><td class="miss">419</td><td class="hit">1219</td><td>53.89%</td></tr>
            <tr><td>class recall</td><td>24.76%</td><td>58.37%</td><td>38.50%</td><td></td></tr></table>
          </div><div class="vscroll"><svg><use href="#up"/></svg><div class="thumb t-perf"></div><svg class="d"><use href="#up"/></svg></div></div>
          <div class="hscroll"><svg class="l"><use href="#up"/></svg><div class="thumb t-perfh"></div><svg class="r"><use href="#up"/></svg><div class="corner"></div></div>
        </div>
      </div>
    </div>
    <div class="dock repo" data-panel="repo"></div>
  </div>
  <footer class="status"><div></div></footer>
</section>
</div>
</main>
</body>
</html>
```

FILE: panels.js
```js
// Fills every placeholder with the shared panel it names.
document.querySelectorAll("[data-panel]").forEach((slot) => {
  const template = document.getElementById("tpl-" + slot.dataset.panel);
  slot.append(template.content.cloneNode(true));
});
```

FILE: styles.css
```css
* { box-sizing: border-box; }
body { margin: 0; background: #fff; }
.sprite { display: none; }
.page { width: 1600px; height: 1200px; padding: 163px 20px 0; overflow: hidden; }
.row { display: flex; gap: 20px; }
.row-small { height: 516px; align-items: flex-start; }
.row-large { align-items: flex-start; }

/* ---------- window chrome ---------- */
.window {
  width: 770px; height: 432.500px; flex: none; overflow: hidden;
  display: flex; flex-direction: column;
  background: #fafafa; color: #222;
  font: 7.200px/1.2 "Liberation Sans", Arial, sans-serif; white-space: nowrap;
}
.window.small { zoom: .65801; }
.window svg { flex: none; display: block; }
.window h1, .window h2, .window h3, .window p, .window ul, .window pre { margin: 0; padding: 0; }
.window ul { list-style: none; }
.i10 { width: 10px; height: 10px; }
.i8 { width: 8px; height: 8px; }
.close { width: 7px; height: 7px; color: #aaa; }

.chrome { flex: none; }
.titlebar { height: 13.500px; background: #f3f3f3; display: flex; align-items: center; padding: 0 11px 0 1px; }
.titlebar .i10 { width: 9px; height: 9px; }
.titlebar h1 { font: 400 7.200px/1 "Open Sans", "Noto Sans", sans-serif; letter-spacing: -.13px; color: #222; margin-left: 3px; }
.winbtns { display: flex; gap: 20.500px; margin-left: auto; color: #333; }
.winbtns svg { width: 8px; height: 8px; }

.menubar { height: 12.500px; background: #fff; display: flex; align-items: center; gap: 8.350px; padding: 1.500px 0 0 5px; color: #222; }
.toolbar { height: 26.300px; border-top: 1px solid #e3e3e3; border-bottom: 1px solid #dcdcdc; padding: 2px 2.300px 0 2.500px; display: flex; align-items: flex-start; }
.btn { border: 1px solid #cfcfcf; border-radius: 1px; background: linear-gradient(#f6f6f6, #dfdfdf); display: flex; align-items: center; justify-content: center; }
.tool { width: 26.300px; height: 19.500px; margin-right: 3.300px; }
.tool svg { width: 14px; height: 14px; }
.tool.off { background: #cdcdcd; border-color: #cdcdcd; }
.split { display: flex; }
.split .tool { margin-right: 0; width: 26.700px; }
.split.save .tool { width: 28.300px; }
.drop { width: 14.500px; height: 19.500px; border-left: 0; }
.split.run { margin: 0 3.600px 0 12.200px; }
.split.run .drop { width: 16px; }
.drop svg { width: 4.500px; height: 4.500px; }
.views-label { color: #999; width: 20px; margin: 6.200px 4px 0 35.800px; }
.views { display: flex; height: 19px; border: 1px solid #cfcfcf; background: linear-gradient(#f4f4f4, #e0e0e0); }
.views span { width: 60px; border-right: 1px solid #cfcfcf; display: flex; align-items: center; justify-content: center; text-align: center; line-height: 9.500px; }
.views span:last-child { border-right: 0; width: 59px; }
.small .views span:nth-child(1), .window:not(.small) .views span:nth-child(2) { background: #cbcbcb; font-weight: 700; }
.find { margin-left: auto; width: 124px; height: 19px; border: 1px solid #c8c8c8; background: #fff; display: flex; align-items: center; justify-content: space-between; padding: 1px 3px 0; font-style: italic; color: #8c8c8c; }
.scope { width: 54.500px; height: 19px; border: 1px solid #c8c8c8; border-left: 0; background: linear-gradient(#f4f4f4, #e0e0e0); display: flex; align-items: center; justify-content: center; gap: 4.500px; }
.scope svg { width: 4.500px; height: 4.500px; }
.status { height: 13.500px; display: flex; justify-content: flex-end; padding: 2px 2px 0 0; }
.status div { width: 98px; height: 9.500px; border: 1px solid #e9e9e9; border-radius: 2px; background: #f6f6f6; }

/* ---------- docked panels ---------- */
.work { height: 366.500px; flex: none; padding: 5.300px 1.500px 0 1.300px; display: flex; }
.dock { display: flex; flex-direction: column; min-height: 0; }
.dock > .tab { height: 18px; flex: none; width: 93px; border: 1px solid #d9dbdb; border-bottom: 0; border-radius: 2px 2px 0 0; background: #e8eaea; display: flex; align-items: center; justify-content: space-between; padding: 0 14px 0 4.500px; font-size: 7.800px; color: #1a1a1a; }
.dock > .body { flex: 1; min-height: 0; border: 1px solid #d9dbdb; border-top-color: #dfe1e1; background: #e8eaea; border-radius: 0 2px 2px 2px; display: flex; flex-direction: column; overflow: hidden; }
.repo-actions { display: flex; gap: 3px; padding: 4px 4px 4.500px; height: 27px; flex: none; border-bottom: 1px solid #d4d6d6; }
.repo-actions .btn { flex: 1; gap: 3px; height: 17.500px; }
.repo-actions .more { flex: none; width: 30px; gap: 5px; }
.repo-actions .more svg { width: 4.500px; height: 4.500px; }
.repo-actions .more .lines { width: 6px; height: 6px; }
.tree { padding-top: 1.800px; overflow: hidden; }
.tree li { height: 14.420px; display: flex; align-items: center; padding-left: 2.300px; }
.tree .arr { width: 5px; height: 5px; margin-right: 3.300px; }
.tree .i10 { margin-right: 2.500px; }
.tree b { font-size: 6.700px; }
.tree i { font: 400 5.850px/1 "Liberation Sans", Arial, sans-serif; color: #a3a3a3; margin-left: 2.500px; }

.hscroll { height: 9.500px; flex: none; display: flex; align-items: center; background: #ececec; }
.vscroll { width: 9.500px; flex: none; display: flex; flex-direction: column; align-items: center; background: #e9e9e9; }
.hscroll svg, .vscroll svg { width: 7.500px; height: 7.500px; margin: 1.500px 0; }
.hscroll svg { margin: 0 1.500px; }
.hscroll .l { transform: rotate(-90deg); }
.hscroll .r { transform: rotate(90deg); margin-left: auto; }
.vscroll .d { transform: rotate(180deg); margin-top: auto; }
.thumb { background: #c4c6c6; display: flex; align-items: center; justify-content: center; }
.hscroll .thumb { height: 100%; }
.vscroll .thumb { width: 100%; }
.thumb::after { content: ""; }
.hscroll .thumb::after { width: 4px; height: 6px; background: repeating-linear-gradient(90deg, #aaa 0 1px, transparent 1px 3px); }
.vscroll .thumb::after { width: 6px; height: 4px; background: repeating-linear-gradient(#aaa 0 1px, transparent 1px 3px); }
.results .repo .hscroll { display: none; }

/* ---------- design view ---------- */
.design { gap: 7.500px; }
.left { width: 113px; display: flex; flex-direction: column; gap: 8.500px; }
.left .repo { height: 175px; }
.left .repo .hscroll { margin-top: auto; }
.t-repo { width: 81px; margin-left: 1px; }
.ops { flex: 1; }
.ops > .tab { width: 88px; }
.ops-search { margin: 4.500px 3.500px 2.500px; height: 19.500px; flex: none; border: 1px solid #d8d8d8; background: #fff; font-style: italic; color: #999; display: flex; align-items: center; padding-left: 2px; }
.ops-list { height: 102px; flex: none; display: flex; border-top: 1px solid #d4d6d6; border-bottom: 1px solid #d4d6d6; overflow: hidden; }
.ops-list .tree { flex: 1; padding-top: 0; }
.t-ops { height: 70px; }
.market { flex: 1; display: flex; align-items: center; gap: 4px; padding: 1px 0 0 5px; line-height: 9.500px; }
.window a { color: #1a1ae0; text-decoration: underline; }

.process { width: 378.500px; }
.process > .tab { width: 89px; padding-left: 14px; }
.crumbs { height: 22.500px; flex: none; display: flex; align-items: center; padding: 0 3px 0 16px; gap: 4px; border-bottom: 1px solid #dcdede; }
.crumbs a { font-weight: 700; }
.crumbs .sep { width: 3.500px; height: 3.500px; }
.crumbs .dim { border-radius: 50%; }
.canvas-tools { margin-left: auto; }
.canvas-tools, .tools { display: flex; align-items: center; gap: 6.800px; }
.canvas-tools svg { width: 9.500px; height: 9.500px; }
.canvas-tools .gap { margin-right: 6px; }
.canvas-tools b { margin-right: -4px; font-size: 6.800px; }
.canvas { width: 100%; background: #fff; flex: 1; min-height: 0; }
.canvas-box { flex: 1; min-height: 0; display: flex; background: #fff; }
.canvas-box .canvas { width: auto; height: 100%; }
.t-can2 { height: 205px; }
.t-can3 { height: 243px; }
.t-canh { width: 335px; }
.hscroll.can { padding-right: 8px; }
.rec-head { height: 17px; border-top: 1px solid #d4d6d6; display: flex; align-items: center; padding: 0 3px 0 5.500px; gap: 10px; }
.rec-head .i8 { width: 7px; height: 7px; }
.chev { width: 9px; height: 7px; }
.rec-head .chev { margin-left: auto; }
.rec { height: 25px; display: flex; gap: 6.400px; padding: 2px 3.500px 3px; }
.rec > div { flex: 1; border: 1px solid #cfd2d2; border-radius: 1px; background: #e8eaea; display: flex; align-items: center; padding: 0 2px 0 6px; gap: 4px; }
.rec em { margin-left: auto; font-style: normal; color: #4fae48; display: flex; gap: 3px; align-items: center; }

/* ---------- process diagram ---------- */
.canvas text { font-family: "Liberation Sans", Arial, sans-serif; }
.canvas .hint { font-size: 14px; fill: #aaa; letter-spacing: 1.200px; }
.canvas .hint.sm { font-size: 10.500px; letter-spacing: 1px; }
.oplabel text { font-size: 13.200px; font-weight: 700; text-anchor: middle; fill: #333; }
.oplabel.sm text { font-size: 9.600px; }
.oplabel .faded { fill: #a5a5a5; }
.op rect { stroke: #aaa59c; stroke-width: 1.500; rx: 2px; }
.op .sel { stroke-width: 3; stroke: #a8a193; }
.op .violet { fill: #dcd7ea; } .op .pink { fill: #efd7e5; } .op .grey { fill: #bdbdbd; stroke: #aaa; }
.op .yellow { fill: #fcf1cb; } .op .tan { fill: #e3dac8; } .op .green { fill: #d6e6cd; }
.wire path { fill: none; stroke: #cfc9f0; stroke-width: 2.500; }
.wire .gr { stroke: #a8c4a4; } .wire .ol { stroke: #d5caa0; } .wire .gy, .wire.doc path { stroke: #cfcfcf; stroke-width: 2; }
.ports circle { fill: #a99fdc; stroke: #8d86b8; stroke-width: 1; }
.ports .off circle { fill: #e4e4e4; stroke: #999; }
.ports .mod circle { fill: #8dac88; stroke: #708e6c; }
.ports .per circle { fill: #cdbd80; stroke: #a3965f; }
.ports .file circle { fill: #7d3fa0; stroke: #5c2a7a; }
.pt text { font-size: 10.500px; fill: #777; }
.pt.sm text { font-size: 8px; fill: #777; }
.sticky rect { fill: #fbf592; }
.canvas .memo text { font: 14.900px "Open Sans", "Noto Sans", sans-serif; text-anchor: middle; fill: #444; }
.divider { stroke: #d0d0d0; stroke-width: 2; }

/* ---------- parameters and help ---------- */
.right { width: 262px; display: flex; flex-direction: column; gap: 10.500px; margin-right: -2px; flex: none; }
.params { height: 222px; flex: none; }
.params > .tab { width: 97px; }
.p-title { height: 16px; flex: none; display: flex; align-items: center; gap: 3px; padding-left: 8px; border-bottom: 1px solid #d9dbdb; }
.p-scroll { height: 145.500px; flex: none; display: flex; overflow: hidden; border-bottom: 1px solid #d0d2d2; }
.p-rows { flex: 1; padding: 0 3px 0 2px; }
.p-row { height: 26.350px; display: flex; align-items: center; border-bottom: 1px solid #dadcdc; gap: 3px; font-size: 7px; }
.p-row label { width: 61px; flex: none; display: flex; gap: 2px; align-items: center; }
.narrow .p-row label { width: 74.500px; }
.p-row .field { flex: 1; height: 18.500px; background: #fff; border: 1px solid #d9d9d9; display: flex; align-items: center; justify-content: space-between; padding: 0 3px 0 4px; }
.p-row .field.num { padding-left: 1px; }
.field svg { width: 4.500px; height: 4.500px; }
.pick { width: 22px; height: 18.500px; }
.it { font-style: italic; }
.box { width: 8.500px; height: 8.500px; border: 1px solid #d8d8d8; background: #fff; margin-left: 3px; display: flex; }
.box.on::after { content: ""; width: 6px; height: 3.500px; margin: 1px 0 0 .5px; flex: none; border: solid #1c9a86; border-width: 0 0 1.400px 1.400px; transform: rotate(-45deg); }
.grow { flex: 1; display: flex; gap: 3px; }
.t-par { height: 110px; } .t-par2 { height: 94px; }
.p-links { flex: 1; padding: 1px 0 4px 6px; display: flex; flex-direction: column; justify-content: space-around; }
.p-links div { display: flex; align-items: center; gap: 3px; }
.p-links .i10 { width: 9px; height: 9px; }
.help { flex: 1; }
.help > .tab { width: 69px; }
.help > .body { flex-direction: row; }
.help article { flex: 1; overflow: hidden; padding: 5px 0 0 4.500px; font: 7.800px/10.500px "Open Sans", "Noto Sans", sans-serif; color: #333; }
.h-head { display: flex; gap: 4px; height: 30.500px; border-bottom: 1px solid #cfd1d1; margin-right: 4px; align-items: flex-start; }
.h-head svg { width: 13px; height: 13px; margin: 7px 2px 0 3px; }
.help h2 { font-size: 10.600px; line-height: 14px; color: #111; margin-top: 2px; }
.h-head p { color: #888; }
.help h3 { font-size: 7.500px; line-height: 14px; color: #222; }
.help .s1 { margin-top: 5.500px; } .help .s2 { margin-top: 14px; } .help .s3 { margin-top: 3.500px; } .help .s4 { margin-top: 2.500px; }
.help h3 + p { line-height: 14px; }
.help h3 + p.tight { line-height: 10.500px; margin-top: 1.500px; }
.help .tags { color: #999; font-size: 7px; line-height: 10.200px; margin-top: 1.500px; }
.t-help1 { height: 8px; } .t-help2 { height: 6px; }

/* ---------- results view ---------- */
.results { justify-content: space-between; }
.results .dock.repo { width: 136.300px; }
.result { width: 624px; display: flex; flex-direction: column; }
.rtabs { display: flex; gap: 3px; height: 18.200px; flex: none; }
.rtab { height: 18.200px; background: #d4d4d4; border: 1px solid #cbcbcb; border-bottom: 0; border-radius: 2px 2px 0 0; display: flex; align-items: center; font-size: 7.900px; color: #1c1c1c; justify-content: center; }
.rtab.on { background: #e9eaea; font-weight: 700; font-size: 7.850px; border-color: #d9dbdb; }
.rtab .i10 { height: 9.500px; }
.r1 { width: 183.500px; } .r1 span { margin: 0 26px 0 5px; }
.r2 { width: 239px; } .r2 span { margin: 0 28px 0 5px; }
.r3 { flex: 1; padding-right: 5px; } .r3 span { margin: 0 23px 0 5px; }
.r3.on { padding-right: 8px; } .r3.on span { margin-right: 18px; }
.r4 { width: 134.500px; padding-right: 35px; }
.r5 { width: 232px; padding-right: 2px; } .r5 span { margin: 0 25px 0 6px; }
.r6 { flex: 1; } .r6 span { margin: 0 30px 0 5px; }
.r6.on { padding-right: 10px; } .r6.on span { margin-right: 22px; }
.rbody { flex: 1; min-height: 0; display: flex; border: 1px solid #d6d8d8; border-radius: 0 0 2px 2px; background: #fff; overflow: hidden; }
.side { width: 63px; flex: none; background: #e8eaea; border-right: 1px solid #d4d6d6; text-align: center; line-height: 9.800px; }
.side div { height: 60px; padding-top: 14.500px; }
.side .on { background: #cdcfcf; padding-top: 13.500px; }
.side svg { width: 18px; height: 19px; margin: 0 auto 3.700px; }
.side .two { height: 61px; padding-top: 9.500px; }
.side .two svg { margin-bottom: 3px; }
.side .two.b { height: 63px; }
.model { padding: 11.500px 0 0 5.300px; }
.model h2 { font: 700 14.500px/20px "Open Sans", "Noto Sans", sans-serif; color: #000; }
.model pre { font: 8px/10.820px "Liberation Mono", "Courier New", monospace; color: #666; margin-top: 10.500px; }
.criteria { width: 94px; flex: none; background: #e8eaea; padding: .5px 3px 2px; }
.criteria fieldset { margin: 0; padding: 0 2px; border: 1px solid #d0d2d2; height: 100%; min-width: 0; }
.criteria legend { padding: 0 1px; margin-left: .5px; line-height: 9px; font-size: 7.200px; }
.criteria fieldset div { background: #b0d5fd; height: 15.500px; margin-top: 1.500px; padding: 3px 1px; }
.perf { flex: 1; min-width: 0; display: flex; flex-direction: column; }
.perf-main { flex: 1; min-height: 0; display: flex; }
.perf-view { flex: 1; min-width: 0; overflow: hidden; padding: 5px 0 0 5.800px; }
.radios { display: flex; align-items: center; height: 10px; }
.radio { width: 9.500px; height: 9.500px; border: 1px solid #9a9a9a; border-radius: 50%; background: #fff; margin-right: 3px; }
.radio.on { background: radial-gradient(#149080 0 2.700px, #fff 3.300px); }
.radio.second { margin-left: 7.500px; }
.perf-view h3 { font-size: 7.380px; line-height: 10px; margin: 25px 0 4.500px 6px; }
.perf table { border-collapse: collapse; table-layout: fixed; width: 469px; }
.perf td { width: 93.800px; height: 19.200px; border: 1px solid #e6e6e6; padding: 0 0 0 6px; }
.perf .hit { background: #fae7cd; } .perf .miss { background: #f9eee0; }
.t-perf { height: 232px; }
.t-perfh { width: 411px; margin-left: -1px; }
.corner { width: 9.500px; height: 100%; background: #fff; }
```
